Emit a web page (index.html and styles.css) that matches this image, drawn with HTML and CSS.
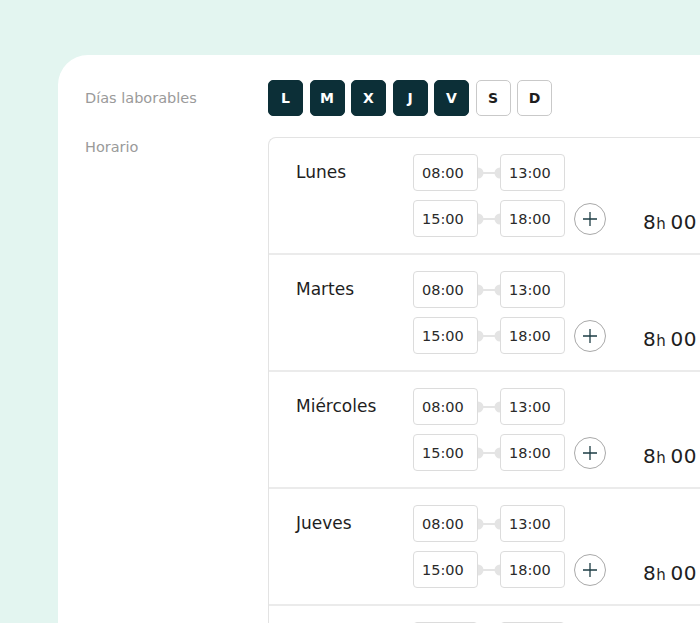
FILE: index.html
```html
<!DOCTYPE html>
<html lang="es">
<head>
<meta charset="utf-8">
<title>Horario</title>
<link rel="stylesheet" href="styles.css">
</head>
<body>
<div class="card">
  <div class="field">
    <div class="label label-days">Días laborables</div>
    <div class="days">
      <span class="day on">L</span>
      <span class="day on">M</span>
      <span class="day on">X</span>
      <span class="day on">J</span>
      <span class="day on">V</span>
      <span class="day">S</span>
      <span class="day">D</span>
    </div>
  </div>
  <div class="field field-schedule">
    <div class="label">Horario</div>
    <div class="table">
      <div class="row">
        <div class="dayname">Lunes</div>
        <div class="slots">
          <div class="slot"><span class="time">08:00</span><span class="link"><svg width="22" height="14" viewBox="0 0 22 14"><circle cx="0" cy="7" r="5.5"/><circle cx="22" cy="7" r="5.5"/><rect x="0" y="6" width="22" height="2"/></svg></span><span class="time">13:00</span></div>
          <div class="slot"><span class="time">15:00</span><span class="link"><svg width="22" height="14" viewBox="0 0 22 14"><circle cx="0" cy="7" r="5.5"/><circle cx="22" cy="7" r="5.5"/><rect x="0" y="6" width="22" height="2"/></svg></span><span class="time">18:00</span><span class="add"><svg width="16" height="16" viewBox="0 0 16 16"><path d="M8 1v14M1 8h14"/></svg></span><span class="total"><span class="big">8</span>h <span class="big">00</span></span></div>
        </div>
      </div>
      <div class="row">
        <div class="dayname">Martes</div>
        <div class="slots">
          <div class="slot"><span class="time">08:00</span><span class="link"><svg width="22" height="14" viewBox="0 0 22 14"><circle cx="0" cy="7" r="5.5"/><circle cx="22" cy="7" r="5.5"/><rect x="0" y="6" width="22" height="2"/></svg></span><span class="time">13:00</span></div>
          <div class="slot"><span class="time">15:00</span><span class="link"><svg width="22" height="14" viewBox="0 0 22 14"><circle cx="0" cy="7" r="5.5"/><circle cx="22" cy="7" r="5.5"/><rect x="0" y="6" width="22" height="2"/></svg></span><span class="time">18:00</span><span class="add"><svg width="16" height="16" viewBox="0 0 16 16"><path d="M8 1v14M1 8h14"/></svg></span><span class="total"><span class="big">8</span>h <span class="big">00</span></span></div>
        </div>
      </div>
      <div class="row">
        <div class="dayname">Miércoles</div>
        <div class="slots">
          <div class="slot"><span class="time">08:00</span><span class="link"><svg width="22" height="14" viewBox="0 0 22 14"><circle cx="0" cy="7" r="5.5"/><circle cx="22" cy="7" r="5.5"/><rect x="0" y="6" width="22" height="2"/></svg></span><span class="time">13:00</span></div>
          <div class="slot"><span class="time">15:00</span><span class="link"><svg width="22" height="14" viewBox="0 0 22 14"><circle cx="0" cy="7" r="5.5"/><circle cx="22" cy="7" r="5.5"/><rect x="0" y="6" width="22" height="2"/></svg></span><span class="time">18:00</span><span class="add"><svg width="16" height="16" viewBox="0 0 16 16"><path d="M8 1v14M1 8h14"/></svg></span><span class="total"><span class="big">8</span>h <span class="big">00</span></span></div>
        </div>
      </div>
      <div class="row">
        <div class="dayname">Jueves</div>
        <div class="slots">
          <div class="slot"><span class="time">08:00</span><span class="link"><svg width="22" height="14" viewBox="0 0 22 14"><circle cx="0" cy="7" r="5.5"/><circle cx="22" cy="7" r="5.5"/><rect x="0" y="6" width="22" height="2"/></svg></span><span class="time">13:00</span></div>
          <div class="slot"><span class="time">15:00</span><span class="link"><svg width="22" height="14" viewBox="0 0 22 14"><circle cx="0" cy="7" r="5.5"/><circle cx="22" cy="7" r="5.5"/><rect x="0" y="6" width="22" height="2"/></svg></span><span class="time">18:00</span><span class="add"><svg width="16" height="16" viewBox="0 0 16 16"><path d="M8 1v14M1 8h14"/></svg></span><span class="total"><span class="big">8</span>h <span class="big">00</span></span></div>
        </div>
      </div>
      <div class="row">
        <div class="dayname"></div>
        <div class="slots">
          <div class="slot"><span class="time"></span><span class="link"><svg width="22" height="14" viewBox="0 0 22 14"><circle cx="0" cy="7" r="5.5"/><circle cx="22" cy="7" r="5.5"/><rect x="0" y="6" width="22" height="2"/></svg></span><span class="time"></span></div>
        </div>
      </div>
    </div>
  </div>
</div>
</body>
</html>
```
FILE: styles.css
```css
html, body {
  margin: 0;
  padding: 0;
  height: 100%;
  overflow: hidden;
}
body {
  background: #e3f5f0;
  font-family: "DejaVu Sans", "Open Sans", sans-serif;
  color: #1e1e1e;
}
.card {
  margin: 55px 0 0 58px;
  background: #fff;
  border-top-left-radius: 30px;
  padding: 25px 0 0 27px;
  width: 800px;
  min-height: 700px;
  box-sizing: border-box;
}
.field {
  display: flex;
  align-items: flex-start;
}
.field-schedule {
  margin-top: 21px;
}
.label {
  width: 183px;
  flex: none;
  font-size: 14.5px;
  color: #9a9a9a;
  line-height: 20px;
}
.label-days {
  line-height: 36px;
}
.days {
  display: flex;
  gap: 6.5px;
}
.day {
  width: 35px;
  height: 36px;
  box-sizing: border-box;
  border-radius: 5px;
  border: 1px solid #c9c9c9;
  background: #fff;
  color: #1e1e1e;
  font-size: 14px;
  font-weight: bold;
  display: flex;
  align-items: center;
  justify-content: center;
}
.day.on {
  background: #0c2f37;
  border-color: #0c2f37;
  color: #fff;
}
.table {
  width: 560px;
  border: 1px solid #e3e3e3;
  border-right: none;
  border-radius: 8px 0 0 0;
}
.row {
  display: flex;
  padding: 16px 0 16px 27px;
  border-bottom: 2px solid #ebebeb;
}
.dayname {
  width: 117px;
  flex: none;
  font-size: 17px;
  line-height: 36px;
  color: #1e1e1e;
}
.slots {
  display: flex;
  flex-direction: column;
  gap: 9px;
}
.slot {
  display: flex;
  align-items: center;
}
.time {
  position: relative;
  z-index: 1;
  background: #fff;
  width: 65px;
  height: 37px;
  box-sizing: border-box;
  border: 1px solid #dcdcdc;
  border-radius: 4px;
  font-size: 14.5px;
  color: #2a2a2a;
  display: flex;
  align-items: center;
  padding-left: 8px;
}
.link {
  width: 22px;
  height: 14px;
  display: flex;
}
.link svg {
  fill: #e4e4e4;
  overflow: visible;
}
.add {
  width: 32px;
  height: 32px;
  box-sizing: border-box;
  margin-left: 9px;
  border: 1px solid #a9a9a9;
  border-radius: 50%;
  display: flex;
  align-items: center;
  justify-content: center;
}
.add svg path {
  stroke: #1d3d44;
  stroke-width: 1.3;
  fill: none;
}
.total {
  margin-left: 37px;
  font-size: 15px;
  color: #1e1e1e;
  padding-top: 7px;
  white-space: nowrap;
}
.big {
  font-size: 20px;
  letter-spacing: 0.5px;
}
```
